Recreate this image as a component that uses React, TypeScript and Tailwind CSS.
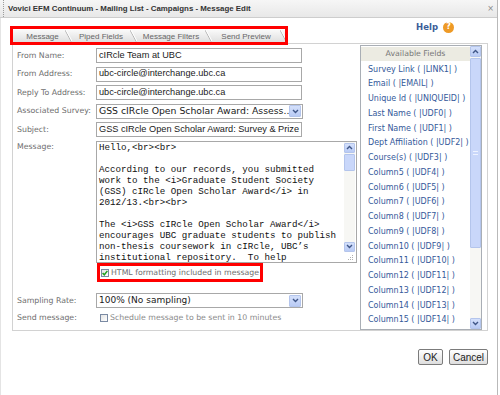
import React from "react";

const fields = [
  "Survey Link ( |LINK1| )",
  "Email ( |EMAIL| )",
  "Unique Id ( |UNIQUEID| )",
  "Last Name ( |UDF0| )",
  "First Name ( |UDF1| )",
  "Dept Affiliation ( |UDF2| )",
  "Course(s) ( |UDF3| )",
  "Column5 ( |UDF4| )",
  "Column6 ( |UDF5| )",
  "Column7 ( |UDF6| )",
  "Column8 ( |UDF7| )",
  "Column9 ( |UDF8| )",
  "Column10 ( |UDF9| )",
  "Column11 ( |UDF10| )",
  "Column12 ( |UDF11| )",
  "Column13 ( |UDF12| )",
  "Column14 ( |UDF13| )",
  "Column15 ( |UDF14| )",
];

const messageLines = [
  "Hello,<br><br>",
  "",
  "According to our records, you submitted",
  "work to the <i>Graduate Student Society",
  "(GSS) cIRcle Open Scholar Award</i> in",
  "2012/13.<br><br>",
  "",
  "The <i>GSS cIRcle Open Scholar Award</i>",
  "encourages UBC graduate students to publish",
  "non-thesis coursework in cIRcle, UBC\u2019s",
  "institutional repository.  To help",
];

const tabs = [
  { label: "Message", cls: "w-[52px] pl-[7px]" },
  { label: "Piped Fields", cls: "w-[58px]" },
  { label: "Message Filters", cls: "w-[68px]" },
  { label: "Send Preview", cls: "w-[68px]" },
];

function Chevron({ up }: { up?: boolean }) {
  return (
    <svg width="7" height="5" viewBox="0 0 7 5">
      <path
        d={up ? "M1 4 L3.5 1.5 L6 4" : "M1 1 L3.5 3.5 L6 1"}
        stroke="#3f5687"
        strokeWidth="1.4"
        fill="none"
      />
    </svg>
  );
}

function ScrollBtn({ up, h }: { up?: boolean; h: string }) {
  return (
    <div
      className={`${h} w-[11px] shrink-0 rounded-[1px] border border-[#b4c5ec] bg-gradient-to-b from-[#d4e0fb] to-[#b9cbf5] flex items-center justify-center`}
    >
      <Chevron up={up} />
    </div>
  );
}

function TabSep() {
  return (
    <svg width="7" height="13" viewBox="0 0 7 13" className="shrink-0">
      <line x1="0" y1="0" x2="7" y2="13" stroke="#b3b3b3" strokeWidth="1" />
      <line x1="1" y1="0" x2="8" y2="13" stroke="#ffffff" strokeWidth="1" />
    </svg>
  );
}

function Label({ children }: { children: React.ReactNode }) {
  return (
    <div className="w-[79px] shrink-0 text-[7.8px] leading-[10px] text-[#6e6e6e] font-['DejaVu_Sans',sans-serif] whitespace-nowrap">
      {children}
    </div>
  );
}

function TextInput({ value }: { value: string }) {
  return (
    <div className="w-[206px] h-[15px] border border-[#a8a8a8] bg-white px-[2px] flex items-center text-[9.2px] text-[#1a1a1a] font-['Liberation_Sans',Arial,sans-serif] whitespace-nowrap overflow-hidden">
      {value}
    </div>
  );
}

function Select({ value, size }: { value: string; size: string }) {
  return (
    <div
      className={`${size} w-[207px] h-[15px] border border-[#a8a8a8] bg-white pl-[2px] pr-[1px] flex items-center justify-between text-[#1a1a1a] font-['DejaVu_Sans',sans-serif] whitespace-nowrap overflow-hidden`}
    >
      <span>{value}</span>
      <div className="w-[12px] h-[12px] rounded-[1px] border border-[#b4c5ec] bg-gradient-to-b from-[#d4e0fb] to-[#b9cbf5] flex items-center justify-center">
        <Chevron />
      </div>
    </div>
  );
}

function Checkbox({ checked }: { checked?: boolean }) {
  return (
    <div className="w-[8px] h-[8px] shrink-0 border border-[#7a8aa3] bg-gradient-to-br from-[#e4e4e4] to-white flex items-center justify-center">
      {checked && (
        <svg width="6" height="6" viewBox="0 0 6 6">
          <path d="M0.6 3 L2.3 4.8 L5.4 0.9" stroke="#21a121" strokeWidth="1.5" fill="none" />
        </svg>
      )}
    </div>
  );
}

export default function App() {
  return (
    <div className="relative w-[500px] h-[395px] bg-white overflow-hidden">
      <div className="w-[498px] h-full border-r border-[#b9b9b9] flex flex-col">
        {/* Title bar */}
        <div className="h-[18px] shrink-0 flex items-center bg-gradient-to-b from-[#f6f6f6] to-[#e8e8e8] border-b border-[#cdcdcd]">
          <div className="ml-[3px] h-full w-0 border-l border-dotted border-[#9c9c9c]" />
          <div className="ml-[4px] flex-1 text-[7.9px] font-bold text-[#333] font-['Liberation_Sans',Arial,sans-serif] whitespace-nowrap">
            Vovici EFM Continuum - Mailing List - Campaigns - Message Edit
          </div>
          <div className="pr-[3px] text-[8px] text-[#888] font-['DejaVu_Sans',sans-serif]">×</div>
        </div>

        {/* Body */}
        <div className="flex-1 flex flex-col pl-[11px] pr-[9px] border-l border-[#e4e4e4]">
          {/* Tabs + help */}
          <div className="h-[25px] shrink-0 flex justify-between">
            <div className="mt-[12px] ml-[1px] h-[13px] w-[272px] overflow-hidden flex bg-gradient-to-b from-[#f9f9f9] to-[#dddddd]">
              {tabs.map((t) => (
                <React.Fragment key={t.label}>
                  <div
                    className={`${t.cls} shrink-0 flex items-center justify-center text-[8px] text-[#666] font-['Liberation_Sans',Arial,sans-serif] whitespace-nowrap`}
                  >
                    {t.label}
                  </div>
                  <TabSep />
                </React.Fragment>
              ))}
            </div>
            <div className="mt-[3px] mr-[34px] h-[12px] flex items-center gap-[5px]">
              <span className="text-[8.5px] font-bold text-[#3b5d98] font-['DejaVu_Sans',sans-serif]">Help</span>
              <div className="w-[11px] h-[11px] rounded-full bg-[#ee9a26] flex items-center justify-center text-[8px] font-bold text-white font-['DejaVu_Sans',sans-serif] leading-none">
                ?
              </div>
            </div>
          </div>

          {/* Panel */}
          <div className="h-[288px] shrink-0 border border-[#d2d2d2] flex">
            {/* Form column */}
            <div className="w-[346px] shrink-0 pl-[4px] pt-[4px] flex flex-col">
              <div className="flex items-center h-[15px]">
                <Label>From Name:</Label>
                <TextInput value="cIRcle Team at UBC" />
              </div>
              <div className="flex items-center h-[15px] mt-[3.5px]">
                <Label>From Address:</Label>
                <TextInput value="ubc-circle@interchange.ubc.ca" />
              </div>
              <div className="flex items-center h-[15px] mt-[3.5px]">
                <Label>Reply To Address:</Label>
                <TextInput value="ubc-circle@interchange.ubc.ca" />
              </div>
              <div className="flex items-center h-[15px] mt-[3.5px]">
                <Label>Associated Survey:</Label>
                <Select size="text-[9.3px]" value="GSS cIRcle Open Scholar Award: Assess.." />
              </div>
              <div className="flex items-center h-[15px] mt-[3.5px]">
                <Label>Subject:</Label>
                <TextInput value="GSS cIRcle Open Scholar Award: Survey & Prize" />
              </div>
              <div className="flex items-start mt-[3.5px]">
                <div className="mt-[1px]">
                  <Label>Message:</Label>
                </div>
                <div className="w-[261px] h-[122px] border border-[#a8a8a8] bg-white flex">
                  <div className="flex-1 px-[2px] overflow-hidden whitespace-pre text-[9.2px] leading-[11px] text-[#111] font-['Liberation_Mono','Courier_New',monospace]">
                    {messageLines.map((l, i) => (
                      <div key={i} className="h-[11px]">
                        {l}
                      </div>
                    ))}
                  </div>
                  <div className="w-[11px] flex flex-col mr-[1px] bg-[#f7f7f4]">
                    <div className="mt-[1px]">
                      <ScrollBtn up h="h-[10px]" />
                    </div>
                    <div className="mt-[1px] h-[17px] rounded-[1px] border border-[#b4c5ec] bg-[#c9d7fa]" />
                    <div className="flex-1" />
                    <ScrollBtn h="h-[10px]" />
                    <div className="h-[10px] bg-white flex items-end justify-end pr-[1px] pb-[1px]">
                      <svg width="7" height="7" viewBox="0 0 7 7">
                        <g fill="#b0b0b0">
                          <rect x="5" y="1" width="1" height="1" />
                          <rect x="3" y="3" width="1" height="1" />
                          <rect x="5" y="3" width="1" height="1" />
                          <rect x="1" y="5" width="1" height="1" />
                          <rect x="3" y="5" width="1" height="1" />
                          <rect x="5" y="5" width="1" height="1" />
                        </g>
                      </svg>
                    </div>
                  </div>
                </div>
              </div>
              <div className="flex items-center h-[19px] mt-[0.5px]">
                <div className="w-[79px] shrink-0" />
                <div className="pl-[5px] flex items-center gap-[2px]">
                  <Checkbox checked />
                  <span className="text-[7.8px] text-[#6e6e6e] font-['DejaVu_Sans',sans-serif] whitespace-nowrap">
                    HTML formatting included in message
                  </span>
                </div>
              </div>
              <div className="flex items-center h-[15px] mt-[11px]">
                <Label>Sampling Rate:</Label>
                <Select size="text-[9px]" value="100% (No sampling)" />
              </div>
              <div className="flex items-center h-[14px] mt-[3px]">
                <Label>Send message:</Label>
                <div className="pl-[4px] flex items-center gap-[2px]">
                  <Checkbox />
                  <span className="text-[7.8px] text-[#8a8a8a] font-['DejaVu_Sans',sans-serif] whitespace-nowrap">
                    Schedule message to be sent in 10 minutes
                  </span>
                </div>
              </div>
            </div>

            {/* Available fields */}
            <div className="ml-[1px] mt-[1px] w-[122px] h-[285px] border border-[#a9aeb5] bg-white flex">
              <div className="flex-1 flex flex-col overflow-hidden">
                <div className="h-[14px] mt-[1px] bg-[#ecebe2] flex items-center justify-center text-[7.8px] text-[#777] font-['DejaVu_Sans',sans-serif]">
                  Available Fields
                </div>
                <div className="pl-[7px] pt-[1.6px]">
                  {fields.map((f) => (
                    <div
                      key={f}
                      className="h-[14.75px] leading-[14.75px] text-[8px] text-[#34599a] font-['DejaVu_Sans',sans-serif] whitespace-nowrap"
                    >
                      {f}
                    </div>
                  ))}
                </div>
              </div>
              <div className="w-[11px] flex flex-col bg-[#f7f7f4]">
                <ScrollBtn up h="h-[11px]" />
                <div className="mt-[1px] h-[190px] rounded-[1px] border border-[#b4c5ec] bg-[#c9d7fa] flex items-center justify-center">
                  <div className="w-[5px] h-[4px] border-y border-[#eef3ff]" />
                </div>
                <div className="flex-1" />
                <ScrollBtn h="h-[11px]" />
              </div>
            </div>
          </div>

          {/* Buttons */}
          <div className="mt-[18px] flex justify-end gap-[6px]">
            <div className="w-[25px] h-[16px] border border-[#7b7b7b] rounded-[2px] bg-gradient-to-b from-white to-[#dedede] flex items-center justify-center text-[10px] text-[#222] font-['Liberation_Sans',Arial,sans-serif]">
              OK
            </div>
            <div className="w-[39px] h-[16px] border border-[#7b7b7b] rounded-[2px] bg-gradient-to-b from-white to-[#dedede] flex items-center justify-center text-[10px] text-[#222] font-['Liberation_Sans',Arial,sans-serif]">
              Cancel
            </div>
          </div>
        </div>
      </div>

      {/* Red highlight annotations */}
      <div className="absolute left-[10px] top-[26px] w-[278px] h-[19px] border-[3px] border-[#f00]" />
      <div className="absolute left-[97px] top-[263px] w-[166px] h-[19px] border-[3px] border-[#f00]" />
    </div>
  );
}
